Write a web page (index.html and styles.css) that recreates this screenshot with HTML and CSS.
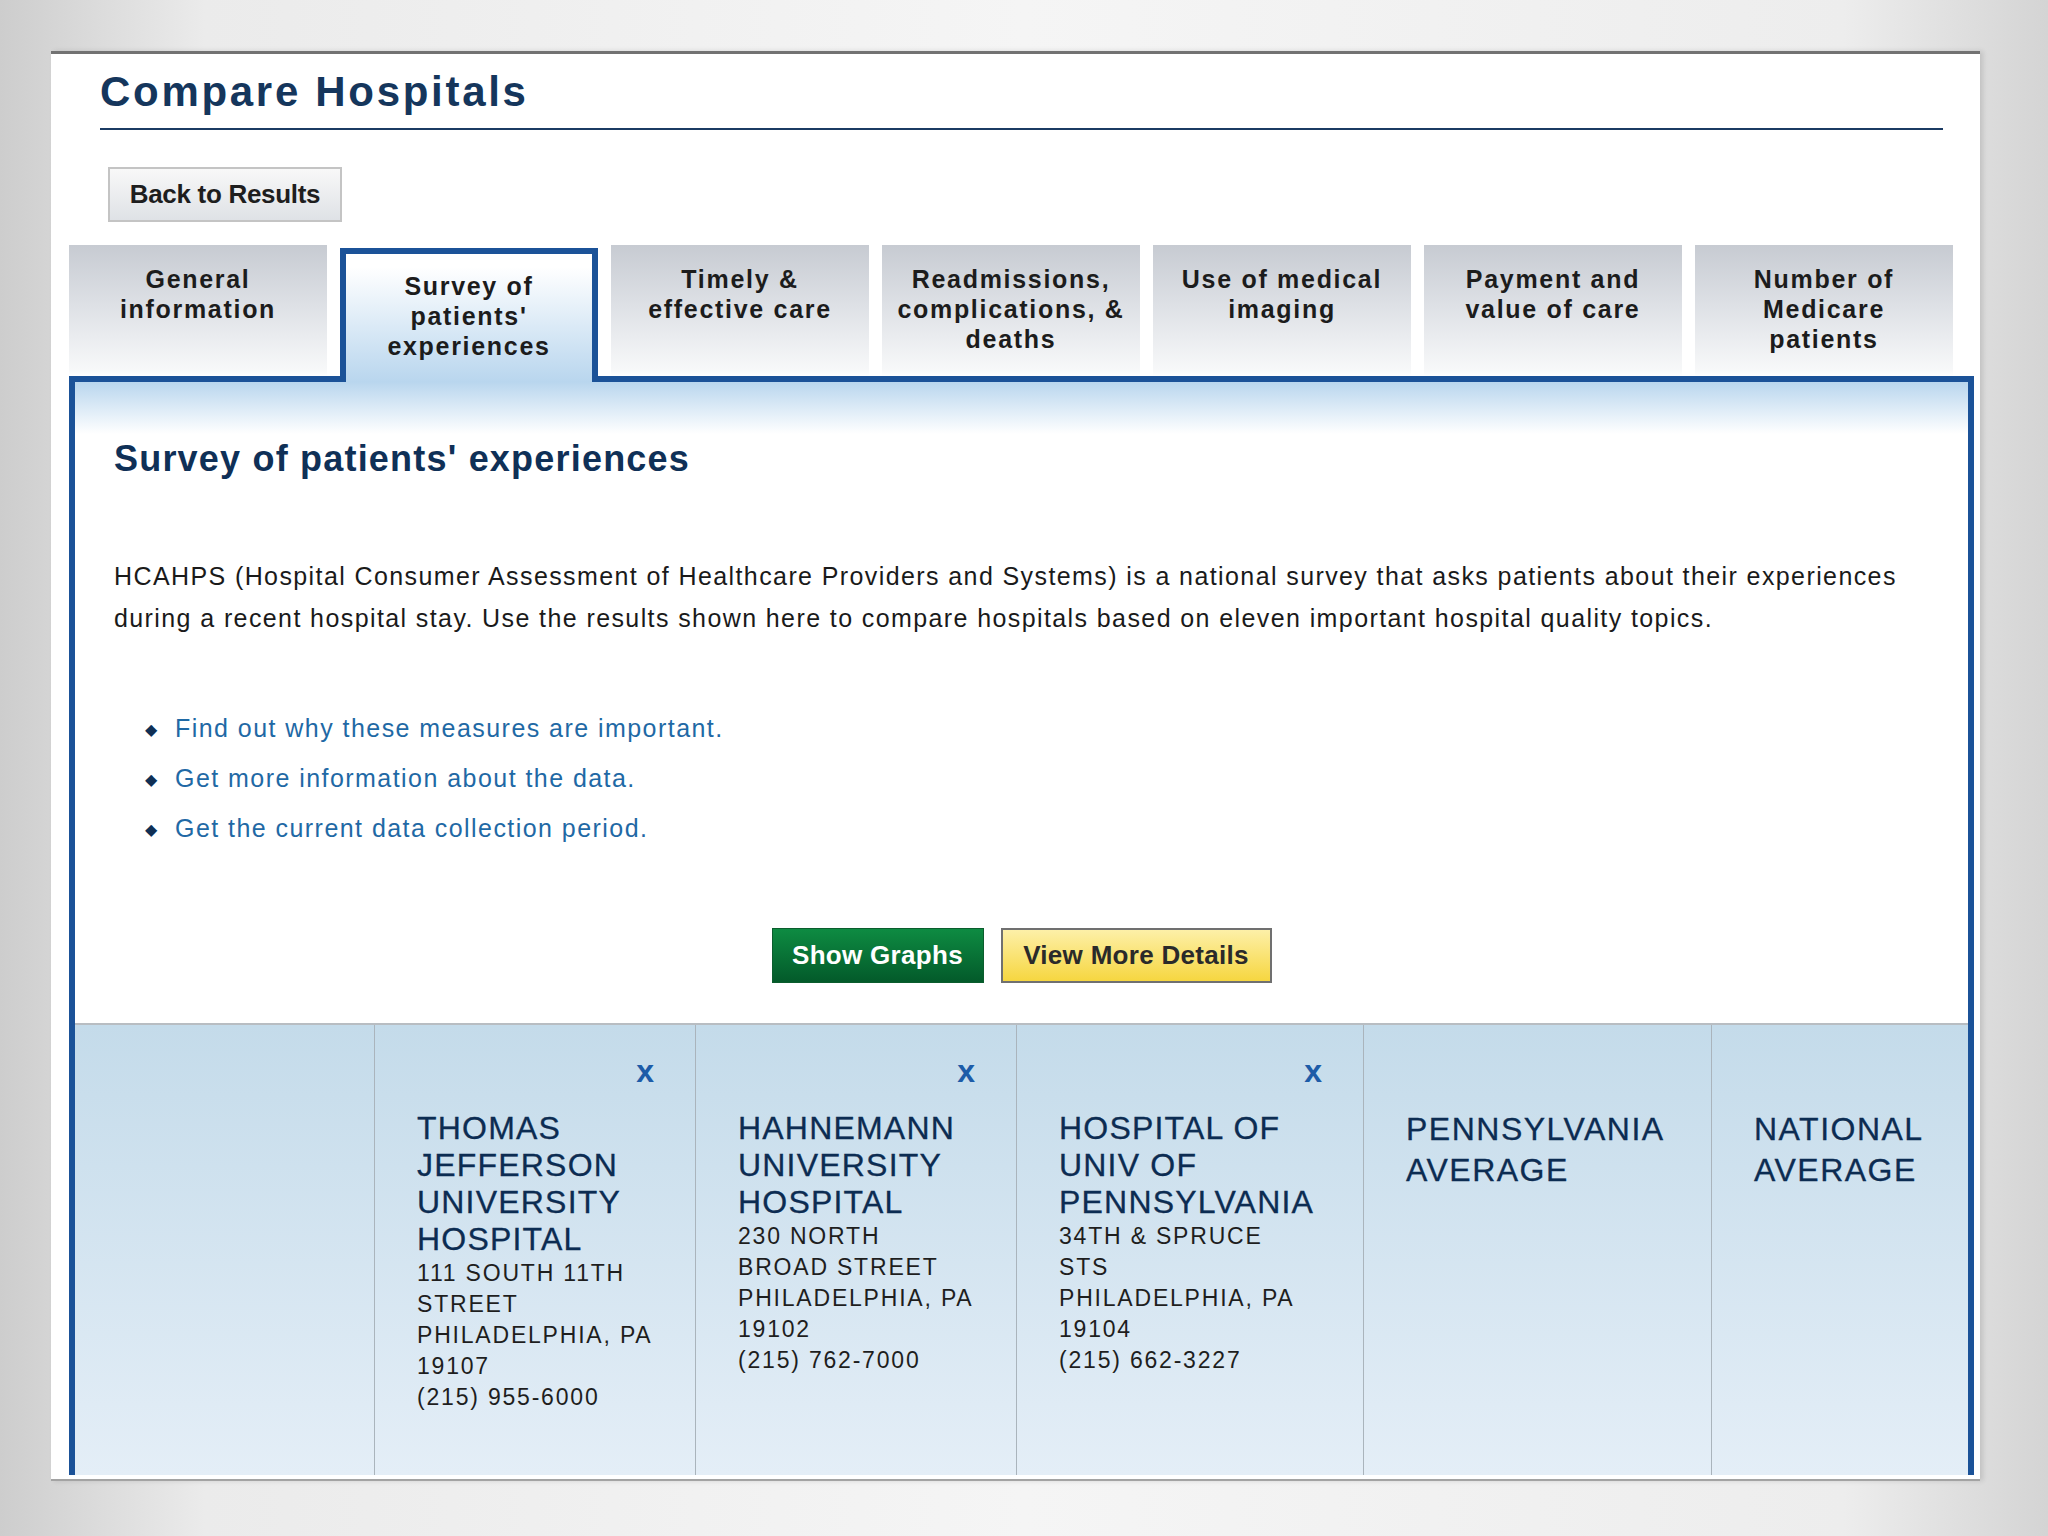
FILE: index.html
```html
<!DOCTYPE html>
<html lang="en">
<head>
    <meta charset="UTF-8">
    <meta name="viewport" content="width=device-width, initial-scale=1.0">
    <title>Compare Hospitals</title>
    <link rel="stylesheet" href="styles.css">
</head>
<body>
<div class="slide">
    <div class="page">
        <h1 class="page_title">Compare Hospitals</h1>

        <button class="btn_back" type="button">Back to Results</button>

        <div class="tabs">
            <div class="tab">General<br>information</div>
            <div class="tab tab_on">Survey of<br>patients'<br>experiences</div>
            <div class="tab">Timely &amp;<br>effective care</div>
            <div class="tab">Readmissions,<br>complications, &amp;<br>deaths</div>
            <div class="tab">Use of medical<br>imaging</div>
            <div class="tab">Payment and<br>value of care</div>
            <div class="tab">Number of<br>Medicare<br>patients</div>
        </div>

        <div class="panel">
            <h2>Survey of patients' experiences</h2>
            <p class="intro">HCAHPS (Hospital Consumer Assessment of Healthcare Providers and Systems) is a national survey that asks patients about their experiences during a recent hospital stay. Use the results shown here to compare hospitals based on eleven important hospital quality topics.</p>

            <ul class="links">
                <li><a href="#">Find out why these measures are important.</a></li>
                <li><a href="#">Get more information about the data.</a></li>
                <li><a href="#">Get the current data collection period.</a></li>
            </ul>

            <div class="btn_row">
                <button class="btn_green" type="button">Show Graphs</button>
                <button class="btn_yellow" type="button">View More Details</button>
            </div>

            <div class="compare">
                <div class="col"></div>
                <div class="col hosp">
                    <div class="close">x</div>
                    <div class="info">
                        <div class="name">THOMAS JEFFERSON UNIVERSITY HOSPITAL</div>
                        <div class="addr">111 SOUTH 11TH STREET<br>PHILADELPHIA, PA 19107<br>(215) 955-6000</div>
                    </div>
                </div>
                <div class="col hosp">
                    <div class="close">x</div>
                    <div class="info">
                        <div class="name">HAHNEMANN UNIVERSITY HOSPITAL</div>
                        <div class="addr">230 NORTH BROAD STREET<br>PHILADELPHIA, PA 19102<br>(215) 762-7000</div>
                    </div>
                </div>
                <div class="col hosp">
                    <div class="close">x</div>
                    <div class="info">
                        <div class="name">HOSPITAL OF UNIV OF PENNSYLVANIA</div>
                        <div class="addr">34TH &amp; SPRUCE STS<br>PHILADELPHIA, PA 19104<br>(215) 662-3227</div>
                    </div>
                </div>
                <div class="col avg">PENNSYLVANIA AVERAGE</div>
                <div class="col avg">NATIONAL AVERAGE</div>
            </div>
        </div>
    </div>
</div>
</body>
</html>
```

FILE: styles.css
```css
body{
    margin: 0;
    font-family: "Liberation Sans", Arial, sans-serif;
    background: linear-gradient(90deg, #cdcdcd 0%, #ebebeb 10%, #f5f5f5 50%, #ededed 90%, #d4d4d4 100%);
}

.slide{
    height: 1536px;
    box-sizing: border-box;
    padding: 51px 68px 0 51px;
}

.page{
    width: 1929px;
    height: 1430px;
    box-sizing: border-box;
    background: #fff;
    border-top: 3px solid #727272;
    border-bottom: 2px solid #a3a3a3;
    box-shadow: 3px 0 5px rgba(0,0,0,0.12);
    padding: 0 6px 4px 18px;
    display: flex;
    flex-direction: column;
    overflow: hidden;
}

.page_title{
    margin: 13px 31px 0 31px;
    padding-bottom: 11px;
    border-bottom: 2px solid #1b3b63;
    font-size: 42px;
    line-height: 50px;
    letter-spacing: 2.7px;
    color: #15365c;
}

.btn_back{
    align-self: flex-start;
    margin: 37px 0 0 39px;
    width: 234px;
    height: 55px;
    border: 2px solid #c4c4c4;
    background: linear-gradient(#f8f8f8, #dfe2e6);
    font-family: inherit;
    font-size: 26px;
    font-weight: bold;
    letter-spacing: -0.3px;
    color: #1e1e1e;
    padding: 0;
}

.tabs{
    display: flex;
    align-items: flex-end;
    gap: 13px;
    margin-top: 23px;
}

.tab{
    flex: none;
    width: 258px;
    height: 131px;
    box-sizing: border-box;
    padding-top: 19px;
    text-align: center;
    font-size: 25px;
    font-weight: bold;
    line-height: 30px;
    letter-spacing: 1.7px;
    color: #1c1c1c;
    background: linear-gradient(#c7cbd2 0%, #dde0e5 45%, #f7f8f9 95%, #fff 100%);
}

.tab_on{
    height: 134px;
    padding-top: 17px;
    margin-bottom: -6px;
    border: 6px solid #1b5298;
    border-bottom: none;
    background: linear-gradient(#fff 10%, #b9d6ee 100%);
    position: relative;
    z-index: 1;
}

.panel{
    flex: 1;
    min-height: 0;
    display: flex;
    flex-direction: column;
    border: 6px solid #1b5298;
    border-bottom: none;
    padding: 55px 54px 0 39px;
    background: linear-gradient(#b9d6ee 0px, #fff 52px);
    overflow: hidden;
}

.panel h2{
    margin: 0;
    font-size: 36px;
    line-height: 44px;
    letter-spacing: 1.2px;
    color: #0f3057;
}

.intro{
    margin: 74px 0 0 0;
    font-size: 25px;
    line-height: 42px;
    letter-spacing: 1.4px;
    color: #1a1a1a;
}

.links{
    list-style: none;
    margin: 64px 0 0 0;
    padding: 0 0 0 31px;
}

.links li{
    height: 50px;
    font-size: 25px;
    line-height: 50px;
    letter-spacing: 1.45px;
}

.links li::before{
    content: "\25C6";
    display: inline-block;
    width: 30px;
    font-family: "DejaVu Sans", sans-serif;
    font-size: 16px;
    line-height: 1;
    color: #0f2f55;
    vertical-align: 2px;
}

.links a{
    color: #1f69a5;
    text-decoration: none;
}

.btn_row{
    display: flex;
    justify-content: center;
    gap: 17px;
    margin: 75px -54px 0 -39px;
}

.btn_green, .btn_yellow{
    height: 55px;
    padding: 0;
    font-family: inherit;
    font-size: 26px;
    font-weight: bold;
    letter-spacing: 0.3px;
}

.btn_green{
    width: 212px;
    border: 1px solid #0b5d2d;
    background: linear-gradient(#0e8b42, #035a2a);
    color: #fff;
}

.btn_yellow{
    width: 271px;
    border: 2px solid #707070;
    background: linear-gradient(#fdf0a8, #f6d640);
    color: #2a2a2a;
}

.compare{
    flex: 1;
    display: grid;
    grid-template-columns: 299px 321px 321px 347px 348px 1fr;
    margin: 40px -54px 0 -39px;
    border-top: 2px solid #b8bdc2;
    background: linear-gradient(#c4dbea, #e4eef7);
}

.col{
    padding: 30px 20px 0 42px;
}

.col + .col{
    border-left: 1px solid #aab4bc;
}

.close{
    height: 32px;
    margin-right: 21px;
    text-align: right;
    font-size: 32px;
    font-weight: bold;
    line-height: 32px;
    color: #1d5ca8;
}

.info{
    width: 237px;
    margin-top: 23px;
}

.name{
    font-size: 32px;
    line-height: 37px;
    letter-spacing: 1.2px;
    color: #0c2c52;
    -webkit-text-stroke: 0.3px #0c2c52;
}

.addr{
    font-size: 23px;
    line-height: 31px;
    letter-spacing: 1.8px;
    color: #1e1e1e;
}

.avg{
    padding-top: 84px;
    font-size: 32px;
    line-height: 41px;
    letter-spacing: 1.5px;
    color: #0c2c52;
    -webkit-text-stroke: 0.3px #0c2c52;
}
```
